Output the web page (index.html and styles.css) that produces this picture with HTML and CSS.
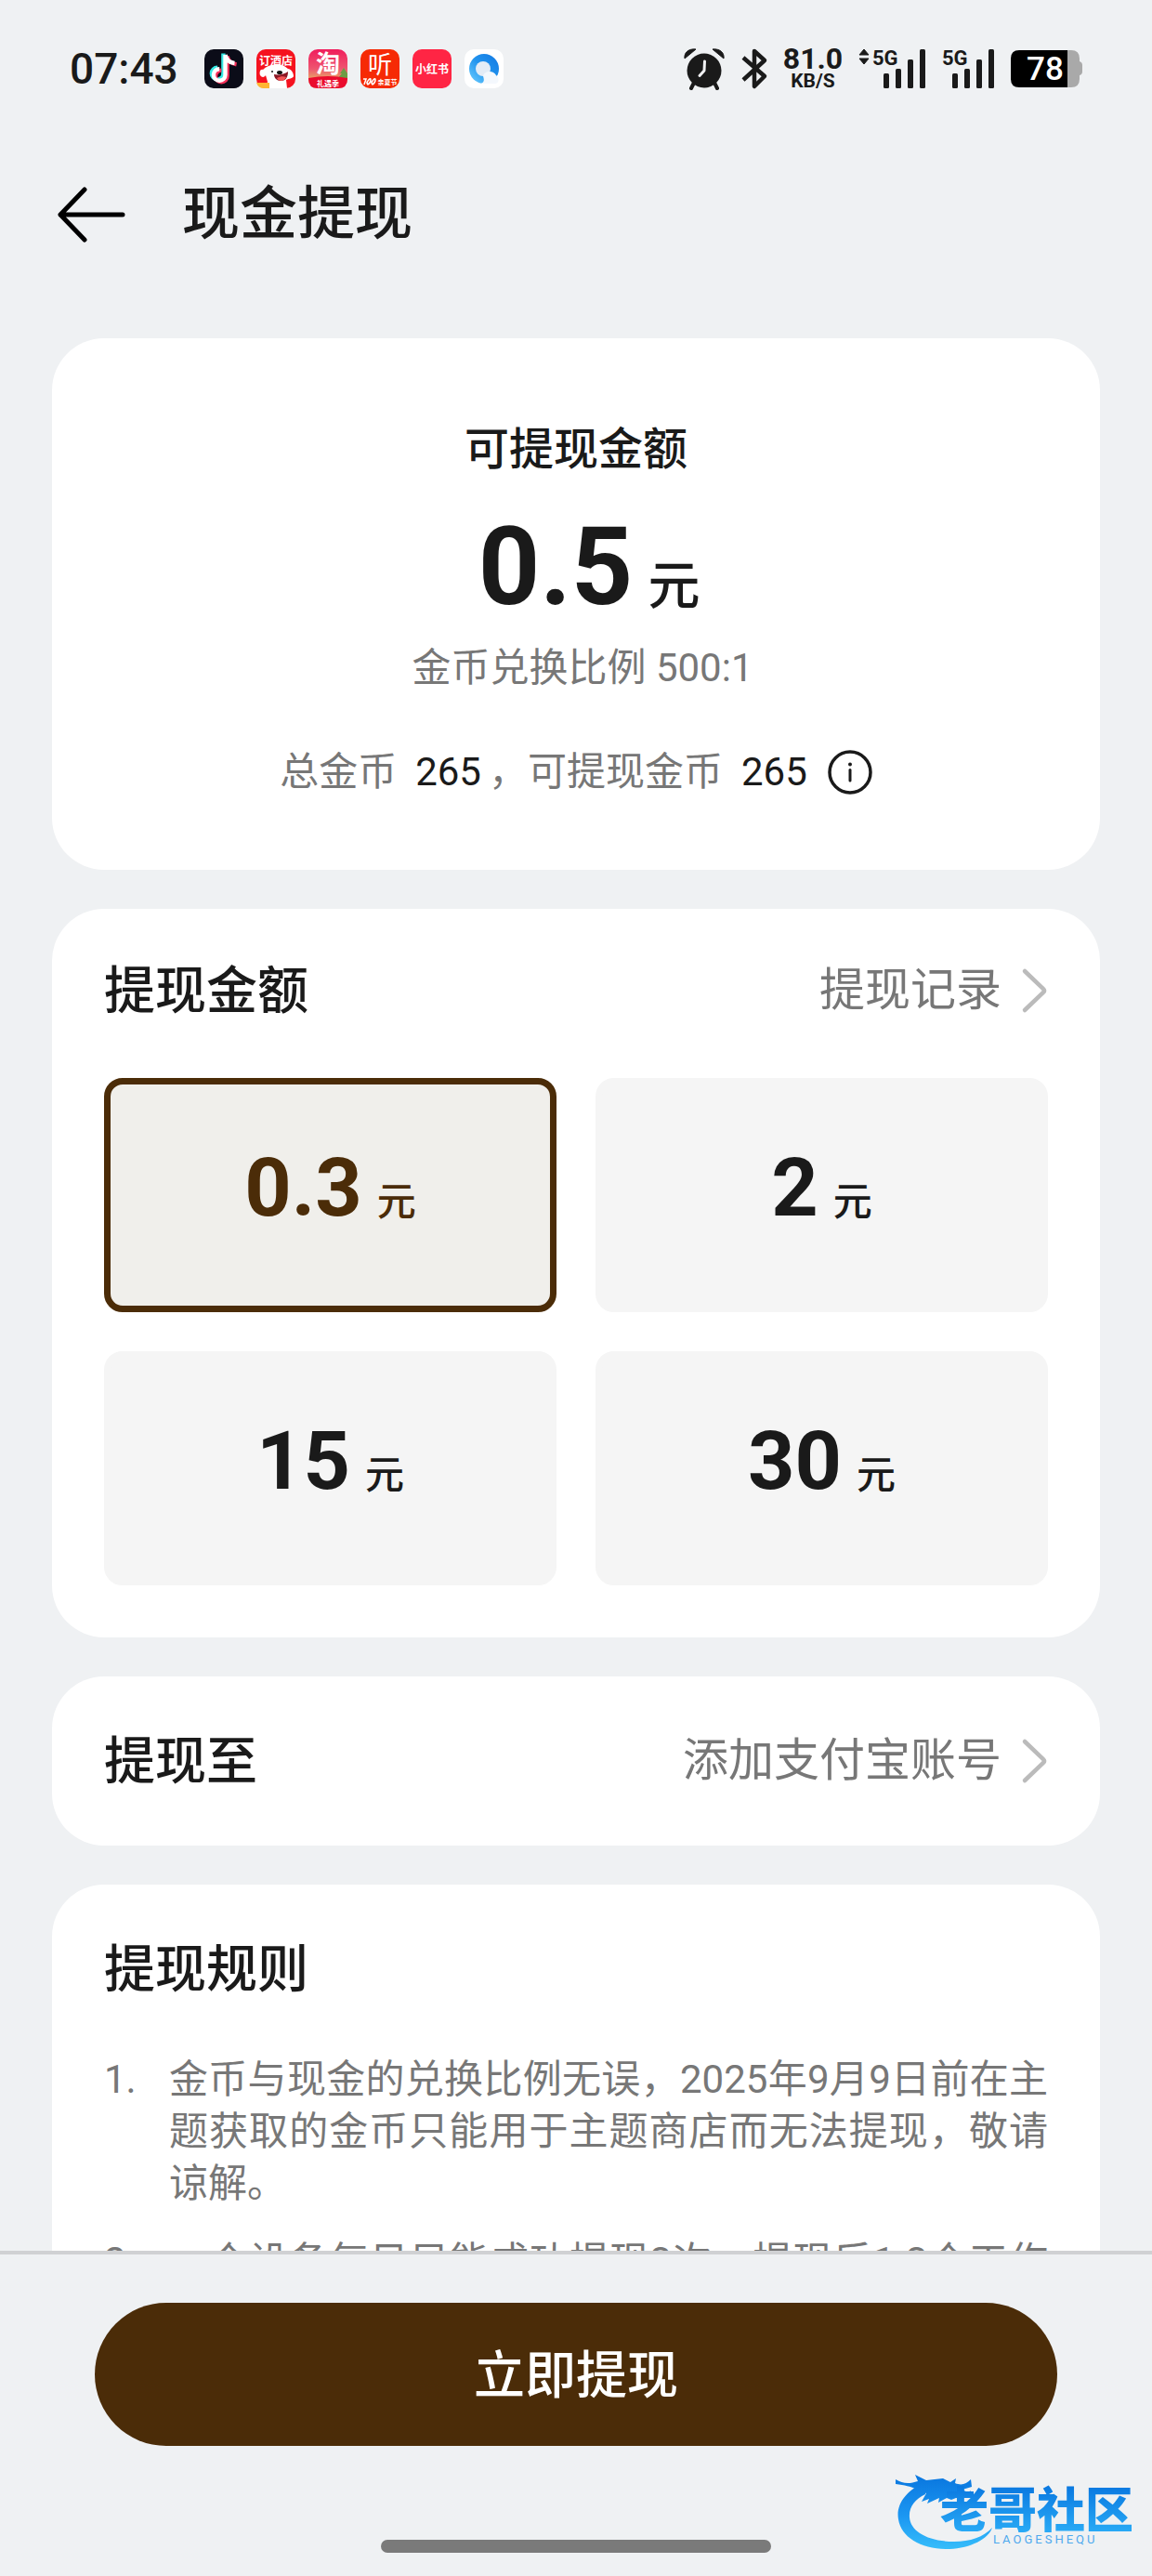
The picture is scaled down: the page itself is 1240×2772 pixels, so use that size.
FILE: index.html
```
<!DOCTYPE html>
<html lang="zh-CN">
<head>
    <meta charset="UTF-8">
    <meta name="viewport" content="width=device-width, initial-scale=1">
    <title>现金提现</title>
    <link rel="stylesheet" href="styles.css">
</head>
<body>
    <div class="screen">
        <!-- 状态栏 -->
        <div class="status-bar">
            <div class="status-left">
                <span class="time">07:43</span>
                <svg class="app-icon" viewBox="0 0 42 42">
                    <rect width="42" height="42" rx="10" fill="#0b0c18"/>
                    <g fill="none" stroke-width="4.4">
                        <path d="M21 5v21.500a6.300 6.300 0 1 1-6.300-6.300M21 6c1 5 4 8 9.500 8.500" stroke="#35e8e4" transform="translate(-.6 -.4)"/>
                        <path d="M24 7v21.500a6.300 6.300 0 1 1-6.300-6.300M24 7c1 5 4 8 10 9" stroke="#f5305a" transform="translate(.6 .4)"/>
                        <path d="M22.500 6v21.500a6.300 6.300 0 1 1-6.300-6.300M22.500 6c1 5 4 8.500 10 9" stroke="#fff"/>
                    </g>
                </svg>
                <svg class="app-icon" viewBox="0 0 42 42">
                    <rect width="42" height="42" rx="10" fill="#f5121f"/>
                    <path d="M7 22c-3-1-4 3-3 6 2 3 5 2 6 0l2 7-2 7h23l-1-9c3-2 7-1 8-4 0-4-3-8-6-8-4-4-8-5-12-4-6-1-11 1-15 5z" fill="#fff"/>
                    <path d="M19 27c5 1 11 0 15-3 0 7-3 10-8 10-4 0-7-3-7-7z" fill="#8d1724"/>
                    <path d="M22 31c4-2 7-2 10-1-2 5-8 5-10 1z" fill="#f45455"/>
                    <ellipse cx="25" cy="25" rx="3" ry="2" fill="#141414"/>
                    <circle cx="17" cy="24" r="1" fill="#141414"/>
                    <path d="M0 36h14v6H8q-6 0-8-6z" fill="#ffb633"/>
                    <text x="21" y="17" class="icon-text icon-text-sm">订酒店</text>
                </svg>
                <svg class="app-icon" viewBox="0 0 42 42">
                    <defs>
                        <linearGradient id="tao" x1="0" y1="0" x2="0" y2="1">
                            <stop offset="0" stop-color="#f01d5c"/>
                            <stop offset=".5" stop-color="#ee5570"/>
                            <stop offset=".75" stop-color="#e8a267"/>
                            <stop offset="1" stop-color="#c9a050"/>
                        </linearGradient>
                    </defs>
                    <rect width="42" height="42" rx="10" fill="url(#tao)"/>
                    <path d="M38 20l-4 6h2l-4 5h10V26z" fill="#6d9c45"/>
                    <path d="M0 31q21-4 42 0v1q0 10-10 10H10Q0 42 0 32z" fill="#ea0c2e"/>
                    <text x="21" y="25" class="icon-text icon-text-lg">淘</text>
                    <text x="21" y="40" class="icon-text icon-text-xs">礼遇季</text>
                </svg>
                <svg class="app-icon" viewBox="0 0 42 42">
                    <rect width="42" height="42" rx="10" fill="#f62a05"/>
                    <text x="21" y="26" class="icon-text icon-text-lg icon-text-light">听</text>
                    <path d="M3 32h3l-2 6M8 34q3-4 3-1t-3 5q-2-2 0-4M13 34q3-4 3-1t-3 5q-2-2 0-4" fill="none" stroke="#fff" stroke-width="1.500"/>
                    <text x="29" y="38" class="icon-text icon-text-xxs">亲夏节</text>
                </svg>
                <svg class="app-icon" viewBox="0 0 42 42">
                    <rect width="42" height="42" rx="10" fill="#ff2544"/>
                    <text x="21" y="26" class="icon-text icon-text-sm">小红书</text>
                </svg>
                <svg class="app-icon" viewBox="0 0 42 42">
                    <defs>
                        <linearGradient id="qb" x1="0" y1="1" x2="1" y2="0">
                            <stop offset="0" stop-color="#6fd0ff"/>
                            <stop offset=".5" stop-color="#2294ee"/>
                            <stop offset="1" stop-color="#1277e2"/>
                        </linearGradient>
                    </defs>
                    <rect width="42" height="42" rx="10" fill="#fff"/>
                    <circle cx="21" cy="21" r="16" fill="url(#qb)"/>
                    <circle cx="20" cy="21" r="8" fill="#e4ecf6"/>
                    <path d="M20 29c1-6 11-7 14-1 4 3 3 9-1 9H17c5-1 4-5 3-8z" fill="#f4f8fd"/>
                </svg>
            </div>
            <div class="status-right">
                <svg width="44" height="44" viewBox="0 0 44 44">
                    <circle cx="22" cy="24" r="18.500" fill="#1a1a1a"/>
                    <path d="M1 11C0 5 5 0 13 1zM43 11C44 5 39 0 31 1z" fill="#1a1a1a" stroke="#1a1a1a" stroke-linejoin="round"/>
                    <path d="M11 37l-3 6M33 37l3 6" stroke="#1a1a1a" stroke-width="4" stroke-linecap="round"/>
                    <path d="M22.500 14l-.5 10-5 5.500" fill="none" stroke="#f0f1f3" stroke-width="3" stroke-linecap="round" stroke-linejoin="round"/>
                </svg>
                <svg width="28" height="44" viewBox="0 0 28 44">
                    <path d="M2 10l23 20-11 11V3l11 10L2 34" fill="none" stroke="#1a1a1a" stroke-width="4.500" stroke-linejoin="round"/>
                </svg>
                <div class="net-speed">
                    <span class="speed-value">81.0</span>
                    <span class="speed-unit">KB/S</span>
                </div>
                <svg width="72" height="44" viewBox="0 0 72 44">
                    <path d="M6 1l5 6H1zM6 17l5-6H1z" fill="#1a1a1a" stroke="#1a1a1a" stroke-linejoin="round"/>
                    <text x="15" y="18" class="signal-text">5G</text>
                    <g fill="#1a1a1a">
                        <rect x="27" y="27" width="6" height="16" rx="1.500"/>
                        <rect x="40" y="22" width="6" height="21" rx="1.500"/>
                        <rect x="53" y="12" width="6" height="31" rx="1.500"/>
                        <rect x="66" y="1" width="6" height="42" rx="1.500"/>
                    </g>
                </svg>
                <svg width="56" height="44" viewBox="0 0 56 44">
                    <text x="0" y="18" class="signal-text">5G</text>
                    <g fill="#1a1a1a">
                        <rect x="11" y="27" width="6" height="16" rx="1.500"/>
                        <rect x="24" y="22" width="6" height="21" rx="1.500"/>
                        <rect x="37" y="12" width="6" height="31" rx="1.500"/>
                        <rect x="50" y="1" width="6" height="42" rx="1.500"/>
                    </g>
                </svg>
                <svg width="77" height="40" viewBox="0 0 77 40">
                    <path d="M61 0h4q9 0 9 9v3q3 1 3 4v7q0 3-3 4v4q0 9-9 9h-4z" fill="#a9a9a9"/>
                    <path d="M9 0h52v40H9q-9 0-9-9V9q0-9 9-9z" fill="#000"/>
                    <text x="37" y="32" class="battery-text">78</text>
                </svg>
            </div>
        </div>

        <header class="title-bar">
            <button class="back" type="button" aria-label="返回">
                <svg width="72" height="58" viewBox="0 0 72 58">
                    <path d="M29 2L3 29l26 27M3 29h67" fill="none" stroke="#000" stroke-width="5" stroke-linecap="round" stroke-linejoin="round"/>
                </svg>
            </button>
            <h1>现金提现</h1>
        </header>

        <main class="content">
            <section class="card balance">
                <h2>可提现金额</h2>
                <p class="total"><span class="total-num">0.5</span><span class="total-unit">元</span></p>
                <p class="rate">金币兑换比例 500:1</p>
                <div class="coins">
                    <span>总金币</span><b>265</b><span class="comma">，</span><span>可提现金币</span><b>265</b>
                    <button class="info" type="button" aria-label="说明">
                        <svg width="48" height="48" viewBox="0 0 48 48">
                            <circle cx="24" cy="24" r="22" fill="none" stroke="#1a1a1a" stroke-width="3.500"/>
                            <circle cx="24" cy="15.500" r="2" fill="#1a1a1a"/>
                            <path d="M24 21.500V33" stroke="#1a1a1a" stroke-width="3" stroke-linecap="round"/>
                        </svg>
                    </button>
                </div>
            </section>

            <section class="card amounts">
                <div class="row">
                    <h2>提现金额</h2>
                    <a class="more" href="#">提现记录
                        <svg width="28" height="48" viewBox="0 0 28 48"><path d="M3 3l20 19q2 2 0 4L3 45" fill="none" stroke="#bbb" stroke-width="4.500" stroke-linecap="round"/></svg>
                    </a>
                </div>
                <div class="grid">
                    <button class="amount selected" type="button"><span class="num">0.3</span><span class="unit">元</span></button>
                    <button class="amount" type="button"><span class="num">2</span><span class="unit">元</span></button>
                    <button class="amount" type="button"><span class="num">15</span><span class="unit">元</span></button>
                    <button class="amount" type="button"><span class="num">30</span><span class="unit">元</span></button>
                </div>
            </section>

            <section class="card account">
                <div class="row">
                    <h2>提现至</h2>
                    <a class="more" href="#">添加支付宝账号
                        <svg width="28" height="48" viewBox="0 0 28 48"><path d="M3 3l20 19q2 2 0 4L3 45" fill="none" stroke="#bbb" stroke-width="4.500" stroke-linecap="round"/></svg>
                    </a>
                </div>
            </section>

            <section class="card rules">
                <h2>提现规则</h2>
                <ol>
                    <li>金币与现金的兑换比例无误，2025年9月9日前在主题获取的金币只能用于主题商店而无法提现，敬请谅解。</li>
                    <li>一个设备每日只能成功提现3次，提现后1-3个工作日内到账。</li>
                </ol>
            </section>
        </main>

        <footer class="bottom">
            <button class="submit" type="button">立即提现</button>
            <div class="home-bar"></div>
            <svg class="watermark" viewBox="0 0 260 92">
                <defs>
                    <linearGradient id="wm" gradientUnits="userSpaceOnUse" x1="0" y1="8" x2="0" y2="84">
                        <stop offset="0" stop-color="#0a78e0"/>
                        <stop offset=".55" stop-color="#1c97f2"/>
                        <stop offset="1" stop-color="#35bcfa"/>
                    </linearGradient>
                    <linearGradient id="wmText" x1="0" y1="0" x2="0" y2="1">
                        <stop offset=".2" stop-color="#0a78e0"/>
                        <stop offset="1" stop-color="#2fb4fa"/>
                    </linearGradient>
                </defs>
                <path d="M32 13C12 21 0 37 3 53c3 20 26 33 55 32 23-1 42-11 46-23-9 10-24 15-41 15-28 0-47-11-48-26-1-11 6-20 17-25z" fill="url(#wm)"/>
                <path d="M0 10c8 5 15 5 24 2l-3-7 12 6 18-2 8 4 6-4-1 5c7 3 12 1 17-4l1 8-10 3c4 3 7 3 9 1l-3 7c-8-1-12 0-18 3l-5-2-9 5 1-5-13 6 2-5-8 3 5-9c-7-2-13-8-33-10z" fill="url(#wm)"/>
                <text x="48" y="62" class="watermark-text" fill="url(#wmText)">老哥社区</text>
                <text x="105" y="79" class="watermark-sub">LAOGESHEQU</text>
            </svg>
        </footer>
    </div>
</body>
</html>
```

FILE: styles.css
```
* {
    box-sizing: border-box;
}

body {
    margin: 0;
    background-color: #eff1f3;
    color: #1a1a1a;
    font-family: Roboto, "Noto Sans CJK SC", sans-serif;
}

h1, h2, p, ol {
    margin: 0;
    padding: 0;
    font-weight: 500;
}

button {
    margin: 0;
    padding: 0;
    border: none;
    background: none;
    color: inherit;
    font-family: inherit;
    cursor: pointer;
}

svg {
    display: block;
    flex-shrink: 0;
    overflow: visible;
}

.screen {
    display: flex;
    flex-direction: column;
    height: 100vh;
    overflow: hidden;
}

/* status bar */
.status-bar {
    display: flex;
    justify-content: space-between;
    align-items: center;
    height: 148px;
    padding: 0 75px;
    flex-shrink: 0;
}

.status-left {
    display: flex;
    align-items: center;
    gap: 14px;
}

.time {
    width: 131px;
    font-size: 46px;
    font-weight: 500;
}

.app-icon {
    width: 42px;
    height: 42px;
}

.icon-text {
    fill: #fff;
    font-family: "Noto Sans CJK SC", sans-serif;
    font-weight: 700;
    text-anchor: middle;
}

.icon-text-lg {
    font-size: 26px;
}

.icon-text-light {
    font-weight: 400;
}

.icon-text-sm {
    font-size: 12px;
}

.icon-text-xs {
    font-size: 8px;
}

.icon-text-xxs {
    font-size: 7px;
}

.status-right {
    display: flex;
    align-items: center;
    gap: 18px;
}

.net-speed {
    display: flex;
    flex-direction: column;
    align-items: center;
    width: 62px;
}

.speed-value {
    font-size: 32px;
    font-weight: 700;
    line-height: 26px;
}

.speed-unit {
    font-size: 21px;
    font-weight: 700;
    line-height: 22px;
}

.signal-text {
    fill: #1a1a1a;
    font-size: 22px;
    font-weight: 700;
}

.battery-text {
    fill: #fff;
    font-size: 35px;
    font-weight: 500;
    text-anchor: middle;
}

/* title */
.title-bar {
    display: flex;
    align-items: center;
    gap: 62px;
    height: 164px;
    padding: 2px 62px 0;
    flex-shrink: 0;
}

.title-bar h1 {
    font-size: 62px;
    line-height: 80px;
}

.content {
    flex: 1;
    min-height: 0;
    overflow: hidden;
    padding: 52px 56px 0;
}

.card {
    margin-bottom: 42px;
    padding: 56px;
    border-radius: 56px;
    background-color: #fff;
}

.card h2 {
    font-size: 55px;
    line-height: 64px;
}

/* balance */
.card.balance {
    display: flex;
    flex-direction: column;
    align-items: center;
    height: 572px;
    padding-top: 90px;
}

.card.balance h2 {
    font-size: 48px;
    line-height: 60px;
}

.total {
    display: flex;
    align-items: baseline;
    gap: 16px;
    margin-top: 36px;
    padding-left: 28px;
    line-height: 120px;
}

.total-num {
    font-size: 116px;
    font-weight: 700;
}

.total-unit {
    font-size: 56px;
}

.rate {
    padding-left: 14px;
    color: #777;
    font-size: 42px;
    font-weight: 400;
    line-height: 56px;
}

.coins {
    display: flex;
    align-items: center;
    margin-top: 56px;
    color: #777;
    font-size: 42px;
    line-height: 56px;
}

.coins b {
    margin-left: 20px;
    color: #1a1a1a;
    font-weight: 400;
}

.coins .comma {
    margin-left: 8px;
}

.info {
    margin-left: 22px;
}

/* rows */
.row {
    display: flex;
    justify-content: space-between;
    align-items: center;
}

.more {
    display: flex;
    align-items: center;
    gap: 22px;
    color: #777;
    font-size: 49px;
    line-height: 64px;
    text-decoration: none;
}

.grid {
    display: grid;
    grid-template-columns: 1fr 1fr;
    gap: 42px;
    margin-top: 62px;
}

.amount {
    display: flex;
    justify-content: center;
    align-items: baseline;
    gap: 16px;
    height: 252px;
    padding-top: 59px;
    border: 7px solid #f5f5f5;
    border-radius: 20px;
    background-color: #f5f5f5;
    line-height: 104px;
}

.amount.selected {
    border-color: #4b2c08;
    background-color: #f0efeb;
    color: #4b2c08;
}

.num {
    font-size: 88px;
    font-weight: 700;
}

.unit {
    font-size: 42px;
    font-weight: 500;
}

.account .row {
    height: 70px;
}

/* rules */
.card.rules {
    padding-top: 59px;
}

.rules ol {
    margin-top: 59px;
    list-style: none;
    counter-reset: rule;
    color: #777;
    font-size: 42px;
    font-weight: 400;
    line-height: 56px;
}

.rules li {
    display: flex;
    margin-bottom: 28px;
    text-align: justify;
    counter-increment: rule;
}

.rules li::before {
    content: counter(rule) ".";
    width: 70px;
    flex-shrink: 0;
}

/* bottom */
.bottom {
    position: relative;
    flex-shrink: 0;
    padding: 52px 102px 25px;
    border-top: 4px solid #d0d1d3;
    background-color: #eff1f3;
}

.submit {
    display: block;
    width: 100%;
    height: 154px;
    padding-bottom: 8px;
    border-radius: 77px;
    background-color: #4b2c08;
    color: #fff;
    font-size: 55px;
    font-weight: 500;
}

.home-bar {
    width: 420px;
    height: 14px;
    margin: 101px auto 0;
    border-radius: 7px;
    background-color: #7a7a7a;
}

.watermark {
    position: absolute;
    right: 16px;
    bottom: 22px;
    width: 260px;
    height: 92px;
}

.watermark-text {
    font-family: "Noto Sans CJK SC", sans-serif;
    font-size: 52px;
    font-weight: 900;
}

.watermark-sub {
    fill: #4ea9ee;
    font-size: 13px;
    letter-spacing: 3px;
}
```
